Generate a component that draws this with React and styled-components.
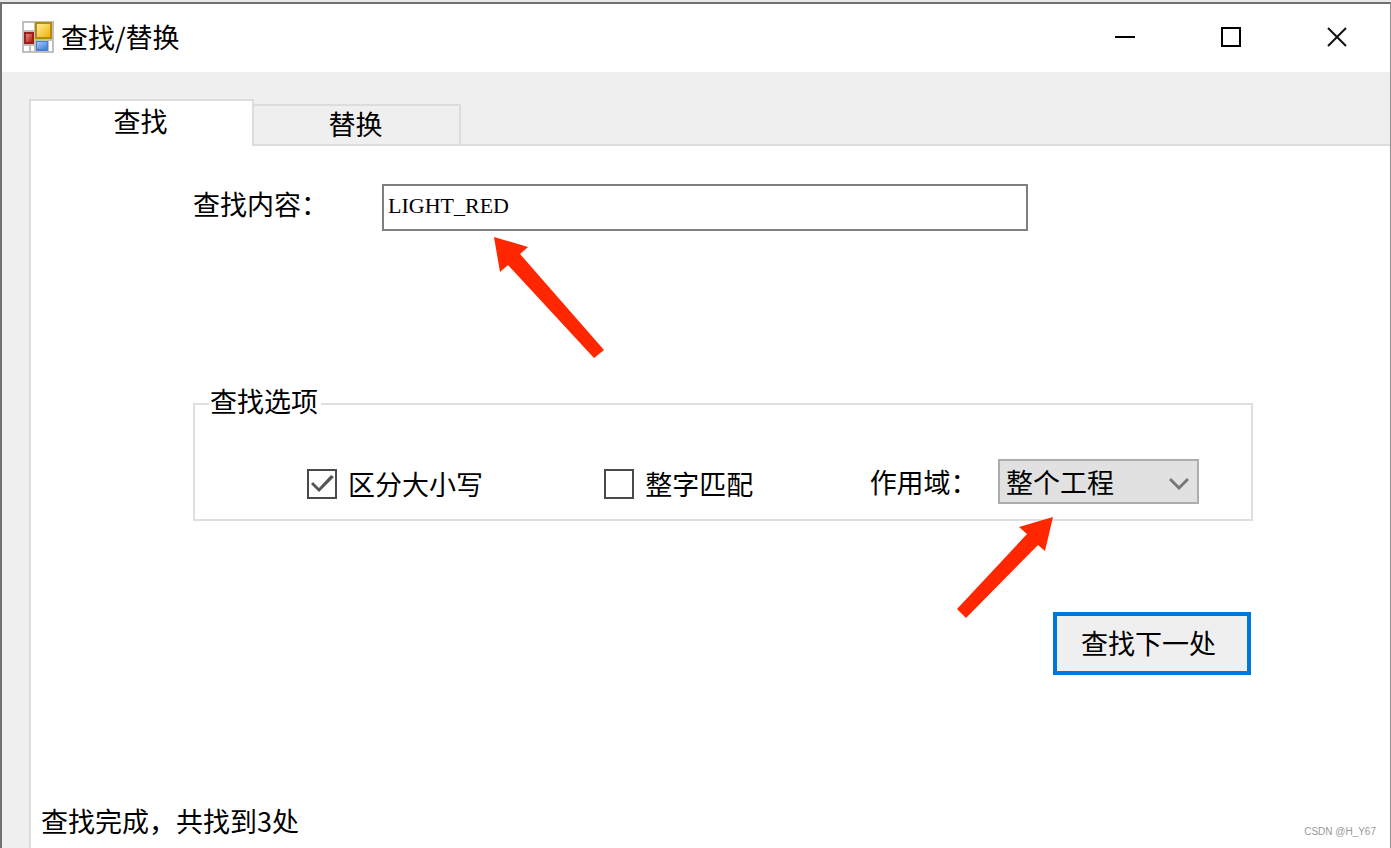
import React, { useState } from 'react';
import styled, { createGlobalStyle } from 'styled-components';

const GlobalStyle = createGlobalStyle`
  * {
    box-sizing: border-box;
  }
  body {
    margin: 0;
    background-color: #e8e8e8;
  }
  body, button, input, select {
    font-family: "Noto Sans CJK SC", sans-serif;
    font-size: 27px;
    line-height: 36px;
    color: #000;
  }
`
const Window = styled.div`
  display: flex;
  flex-direction: column;
  min-height: 100vh;
  background-color: #efefef;
  border-top: 2px solid #e8e8e8;
`
const Frame = styled.div`
  display: flex;
  flex-direction: column;
  flex: 1;
  border: 2px solid #707173;
  border-right: 1px solid #8f8f8f;
  border-bottom: none;
`
const TitleBar = styled.header`
  display: flex;
  align-items: center;
  height: 68px;
  padding: 0 0 3px 20px;
  background-color: #fff;
`
const Title = styled.h1`
  flex: 1;
  margin: 0;
  padding-left: 7px;
  font-size: 27px;
  font-weight: 400;
`
const WindowButton = styled.button`
  display: flex;
  justify-content: center;
  align-items: center;
  width: 106px;
  height: 64px;
  padding: 0;
  background: none;
  border: none;
  &:hover {
    background-color: #e5e5e5;
  }
`
const Body = styled.main`
  display: flex;
  flex-direction: column;
  flex: 1;
  padding: 27px 0 0 27px;
`
const Tabs = styled.div`
  display: flex;
  align-items: flex-end;
`
const Tab = styled.button`
  width: ${props => props.$active ? '225px' : '207px'};
  height: ${props => props.$active ? '47px' : '42px'};
  padding: 0 2px ${props => props.$active ? '6px' : '2px'} 0;
  background-color: ${props => props.$active ? '#fff' : '#efefef'};
  border: 2px solid #dcdcdc;
  border-left-width: ${props => props.$active ? '2px' : '0'};
  border-bottom-width: ${props => props.$active ? '0' : '2px'};
`
const TabLine = styled.div`
  flex: 1;
  border-bottom: 2px solid #dcdcdc;
`
const Panel = styled.section`
  display: flex;
  flex-direction: column;
  flex: 1;
  background-color: #fff;
  border-left: 2px solid #dcdcdc;
`
const Form = styled.form`
  display: flex;
  flex-direction: column;
  flex: 1;
  padding: 38px 137px 0 162px;
`
const SearchRow = styled.div`
  display: flex;
  align-items: flex-start;
  padding-right: 225px;
`
const SearchLabel = styled.label`
  width: 189px;
  padding-top: 2px;
`
const SearchField = styled.div`
  position: relative;
  flex: 1;
`
const SearchInput = styled.input`
  display: block;
  width: 100%;
  height: 47px;
  padding: 0 4px 4px;
  font-family: "Liberation Serif", serif;
  font-size: 22px;
  background-color: #fff;
  border: 2px solid #7f7f7f;
  border-radius: 0;
  outline: none;
`
const Options = styled.fieldset`
  min-width: 0;
  margin: 155px 0 0;
  padding: 37px 52px 15px 112px;
  border: 2px solid #dfdfdf;
`
const Legend = styled.legend`
  margin-left: -98px;
  padding: 0 3px 6px 1px;
  line-height: 30px;
`
const OptionGrid = styled.div`
  display: grid;
  grid-template-columns: 297fr 265fr 329fr;
  align-items: flex-end;
`
const CheckLabel = styled.label`
  display: flex;
  align-items: center;
  gap: 11px;
  padding-bottom: 2px;
`
const CheckBox = styled.input`
  appearance: none;
  display: grid;
  place-content: center;
  width: 30px;
  height: 30px;
  margin: 0;
  background-color: #fff;
  border: 2px solid #4a4a4a;
  &:checked::before {
    content: "";
    width: 26px;
    height: 26px;
    background-color: #555;
    clip-path: polygon(2px 13px, 4px 11px, 10px 17px, 22px 4px, 25px 6px, 10px 21px);
  }
`
const ScopeRow = styled.div`
  display: flex;
  justify-content: space-between;
  align-items: center;
`
const SelectWrap = styled.div`
  position: relative;
  width: 201px;
`
const Select = styled.select`
  appearance: none;
  display: block;
  width: 100%;
  height: 45px;
  padding: 0 40px 0 6px;
  background-color: #e1e1e1;
  border: 2px solid #adadad;
  border-radius: 0;
`
const Chevron = styled.svg`
  position: absolute;
  top: 18px;
  right: 10px;
  pointer-events: none;
`
const FindButton = styled.button`
  align-self: flex-end;
  width: 198px;
  height: 63px;
  margin: 91px 2px 0 0;
  padding: 0 7px 2px 0;
  background-color: #efefef;
  border: 4px solid #0078d7;
`
const Arrow = styled.svg`
  position: absolute;
  top: ${props => props.$top};
  left: ${props => props.$left};
  pointer-events: none;
  z-index: 1;
`
const Footer = styled.footer`
  display: flex;
  justify-content: space-between;
  align-items: flex-end;
  padding: 0 14px 9px 10px;
`
const Watermark = styled.span`
  font-family: "Liberation Sans", sans-serif;
  font-size: 10px;
  line-height: 14px;
  color: #999;
`

function AppIcon() {
  return (
    <svg width="32" height="32" viewBox="0 0 32 32" aria-hidden="true">
      <defs>
        <linearGradient id="gold" x1="0" y1="0" x2="1" y2="1">
          <stop offset="0" stopColor="#ffeb9c" />
          <stop offset="1" stopColor="#f2b200" />
        </linearGradient>
        <linearGradient id="blue" x1="0" y1="0" x2="1" y2="1">
          <stop offset="0" stopColor="#a5c8fa" />
          <stop offset="1" stopColor="#3f7de0" />
        </linearGradient>
        <linearGradient id="red" x1="0" y1="0" x2="1" y2="1">
          <stop offset="0" stopColor="#e58a80" />
          <stop offset="1" stopColor="#b01c16" />
        </linearGradient>
      </defs>
      <rect width="32" height="32" fill="#bfbfbf" />
      <rect x="2" y="2" width="10" height="7" fill="#fff" />
      <rect x="2" y="25" width="5" height="5" fill="#fff" />
      <rect x="9" y="25" width="3" height="5" fill="#fff" />
      <rect x="27" y="20" width="3" height="10" fill="#fff" />
      <rect x="13" y="1" width="17" height="17" fill="#b58a12" />
      <rect x="15" y="3" width="13" height="13" fill="url(#gold)" />
      <rect x="2" y="11" width="10" height="12" fill="#9c1f1b" />
      <rect x="4" y="13" width="6" height="8" fill="url(#red)" />
      <rect x="14" y="20" width="12" height="10" fill="#4a7ed0" />
      <rect x="15" y="21" width="10" height="7" fill="url(#blue)" />
    </svg>
  );
}

function App() {
  const [tab, setTab] = useState('find');
  const [text, setText] = useState('LIGHT_RED');

  return (
    <Window>
      <GlobalStyle />
      <Frame>
        <TitleBar>
          <AppIcon />
          <Title>查找/替换</Title>
          <WindowButton aria-label="最小化">
            <svg width="20" height="20"><path d="M0 10h20" stroke="#000" strokeWidth="2" /></svg>
          </WindowButton>
          <WindowButton aria-label="最大化">
            <svg width="20" height="20"><rect x="1" y="1" width="18" height="18" fill="none" stroke="#000" strokeWidth="2" /></svg>
          </WindowButton>
          <WindowButton aria-label="关闭">
            <svg width="20" height="20"><path d="M1 1l18 18M19 1L1 19" stroke="#111" strokeWidth="2" /></svg>
          </WindowButton>
        </TitleBar>
        <Body>
          <Tabs role="tablist">
            <Tab role="tab" aria-selected={tab === 'find'} $active={tab === 'find'} onClick={() => setTab('find')}>查找</Tab>
            <Tab role="tab" aria-selected={tab === 'replace'} $active={tab === 'replace'} onClick={() => setTab('replace')}>替换</Tab>
            <TabLine />
          </Tabs>
          <Panel>
            <Form onSubmit={e => e.preventDefault()}>
              <SearchRow>
                <SearchLabel htmlFor="keyword">查找内容：</SearchLabel>
                <SearchField>
                  <SearchInput id="keyword" type="text" spellCheck="false" value={text} onChange={e => setText(e.target.value)} />
                  <Arrow $top="53px" $left="112px" width="111" height="122">
                    <path d="M0 0L34 10L26 17L110 113L100 121L14 28L6 35Z" fill="#ff2600" />
                  </Arrow>
                </SearchField>
              </SearchRow>
              <Options>
                <Legend>查找选项</Legend>
                <OptionGrid>
                  <CheckLabel>
                    <CheckBox type="checkbox" defaultChecked />
                    区分大小写
                  </CheckLabel>
                  <CheckLabel>
                    <CheckBox type="checkbox" />
                    整字匹配
                  </CheckLabel>
                  <ScopeRow>
                    <label htmlFor="scope">作用域：</label>
                    <SelectWrap>
                      <Select id="scope" defaultValue="project">
                        <option value="project">整个工程</option>
                      </Select>
                      <Chevron width="20" height="14">
                        <path d="M1 2L10 11L19 2" fill="none" stroke="#777" strokeWidth="3" />
                      </Chevron>
                      <Arrow $top="58px" $left="-41px" width="97" height="102">
                        <path d="M96 0L88 34L81 28L9 101L0 92L70 17L62 10Z" fill="#ff2600" />
                      </Arrow>
                    </SelectWrap>
                  </ScopeRow>
                </OptionGrid>
              </Options>
              <FindButton type="submit">查找下一处</FindButton>
            </Form>
            <Footer>
              <output>查找完成，共找到3处</output>
              <Watermark>CSDN @H_Y67</Watermark>
            </Footer>
          </Panel>
        </Body>
      </Frame>
    </Window>
  );
}

export default App;
